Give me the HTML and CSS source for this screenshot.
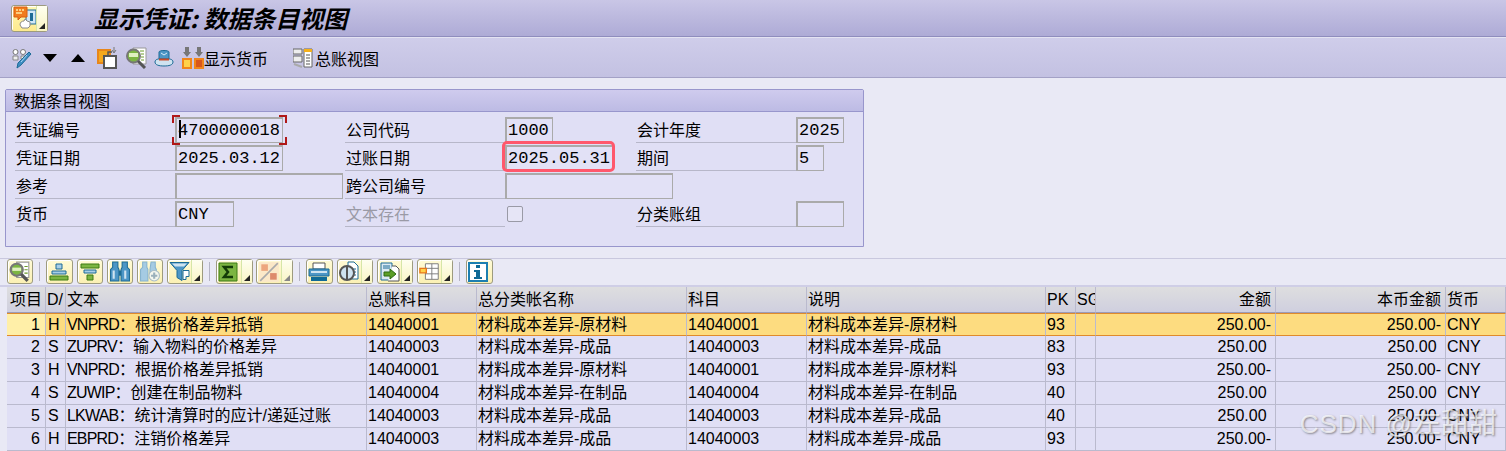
FILE: index.html
```html
<!DOCTYPE html>
<html lang="zh">
<head>
<meta charset="utf-8">
<title>显示凭证: 数据条目视图</title>
<link rel="stylesheet" href="styles.css">
</head>
<body>
<header class="titlebar">
  <button class="btn tcode"><svg width="24" height="24" viewBox="0 0 24 24"><path d="M13 4h10v14H13z" fill="#cfe7f6" stroke="#1c6b96"/><path d="M17 7h3v8h-3z" fill="#1c6b96"/><path d="M1 1h13v10H8l-3 3v-3H1z" fill="#f07c1e" stroke="#d85f10"/><path d="M3 4h2M6 4h2M9 4h2M3 7h6" stroke="#ffe9a0" stroke-width="1.500"/><path d="M7 19c0-3 2-4 4-4l1-2 2 2 3 1v4l-2 2H9z" fill="#fff" stroke="#8a8a8a"/></svg><span class="menu-corner"></span></button>
  <h1>显示凭证: 数据条目视图</h1>
</header>
<nav class="appbar">
  <svg class="i1" width="22" height="22" viewBox="0 0 22 22"><circle cx="3.500" cy="5" r="2.500" fill="#fff" stroke="#777"/><circle cx="11" cy="5" r="2.500" fill="#fff" stroke="#777"/><path d="M1 9h5v4H1zM9 9h4v3H9z" fill="#eee" stroke="#888"/><path d="M19 7L9 18l-4 3 1-5L17 5z" fill="#3f8fc4" stroke="#1c6b96"/><path d="M15 8l-6 7" stroke="#a8d4f0"/></svg>
  <svg class="i2" width="14" height="8" viewBox="0 0 14 8"><path d="M0 0h14L7 8z" fill="#000"/></svg>
  <svg class="i3" width="14" height="8" viewBox="0 0 14 8"><path d="M0 8h14L7 0z" fill="#000"/></svg>
  <svg class="i4" width="21" height="22" viewBox="0 0 21 22"><path d="M1 3h12v13H1z" fill="#f5a81c" stroke="#e8861a" stroke-width="2"/><path d="M7 9h12v12H7z" fill="#fff" stroke="#555" stroke-width="2"/><path d="M11 9V5h4" stroke="#555" stroke-width="1.500" fill="none"/><path d="M17 0v5M15 3l2 3 2-3" stroke="#777" fill="none"/></svg>
  <svg class="i5" width="21" height="22" viewBox="0 0 21 22"><path d="M7 1h13v16H7z" fill="#fff" stroke="#999"/><path d="M14 4h4M15 7h3M15 10h3M15 13h3" stroke="#6a9a2a"/><circle cx="7.500" cy="9" r="6.500" fill="#7cb542" stroke="#777" stroke-width="2"/><path d="M3 6h9v4H3z" fill="#dff0c0"/><path d="M12 14l7 7" stroke="#555" stroke-width="3"/></svg>
  <svg class="i6" width="20" height="18" viewBox="0 0 20 18"><path d="M5 10V3c0-2 10-2 10 0v7z" fill="#4d96c6" stroke="#1c6b96"/><path d="M7 4l3 2 3-2" stroke="#d8ecf8" fill="none"/><path d="M1 13c0-3 4-3 4-3h10s4 0 4 3-4 4-9 4-9-1-9-4z" fill="#cfe3f0" stroke="#1c6b96"/><path d="M5 10.500h10" stroke="#c94a2a" stroke-width="2"/></svg>
  <span class="tool-text t1"><svg width="22" height="22" viewBox="0 0 22 22"><path d="M3 0h4v5h2l-4 5-4-5h2zM15 0h4v5h2l-4 5-4-5h2z" fill="#777"/><path d="M1 12h8v9H1z" fill="#ffd24a" stroke="#f0861c" stroke-width="2"/><path d="M13 12h8v9h-8z" fill="#d8561c" stroke="#f0861c" stroke-width="2"/></svg>显示货币</span>
  <span class="tool-text t2"><svg width="20" height="20" viewBox="0 0 20 20"><path d="M0 1h9v5H0zM0 8h9v6H0z" fill="#eee" stroke="#666"/><path d="M1 16l8 3" stroke="#aaa" stroke-width="2"/><path d="M11 1h8v18h-8z" fill="#fff" stroke="#666"/><path d="M11 1h8v3h-8z" fill="#f5b01c"/><path d="M13 7h4M13 10h4M13 13h4M13 16h4" stroke="#555"/></svg>总账视图</span>
</nav>
<main class="content">
  <section class="group">
    <h2>数据条目视图</h2>
    <div class="form">
      <label>凭证编号</label>
      <div class="cell"><span class="field w108 focus"><i class="caret"></i>4700000018<b class="corner"></b></span></div>
      <label>公司代码</label>
      <div class="cell"><span class="field w48">1000</span></div>
      <label>会计年度</label>
      <div class="cell"><span class="field w48">2025</span></div>

      <label>凭证日期</label>
      <div class="cell"><span class="field w108">2025.03.12</span></div>
      <label>过账日期</label>
      <div class="cell"><span class="field w108 mark">2025.05.31</span></div>
      <label>期间</label>
      <div class="cell"><span class="field w28">5</span></div>

      <label>参考</label>
      <div class="cell"><span class="field w168"></span></div>
      <label>跨公司编号</label>
      <div class="cell"><span class="field w168"></span></div>
      <span class="blank"></span>
      <div class="cell"></div>

      <label>货币</label>
      <div class="cell"><span class="field w58">CNY</span></div>
      <label class="muted">文本存在</label>
      <div class="cell"><span class="check"></span></div>
      <label>分类账组</label>
      <div class="cell"><span class="field w48"></span></div>
    </div>
  </section>

  <div class="alvbar">
    <button class="btn s26"><svg width="22" height="22" viewBox="0 0 20 20"><path d="M7 1h11v14H7z" fill="#fff" stroke="#999"/><path d="M14 5h3M14 8h3M14 11h3" stroke="#6a9a2a"/><circle cx="7" cy="8" r="5.500" fill="#7cb542" stroke="#777" stroke-width="2"/><path d="M3 6h8v3H3z" fill="#dff0c0"/><path d="M11 12l6 6" stroke="#555" stroke-width="3"/></svg></button>
    <span class="sep"></span>
    <button class="btn s27"><svg width="22" height="20" viewBox="0 0 20 20"><path d="M7 2h6v5H7z" fill="#a8cfe8" stroke="#1c6b96"/><path d="M3 9h14v3H3z" fill="#a8cfe8" stroke="#1c6b96"/><path d="M1 14h18v4H1z" fill="#7cb542" stroke="#3d7a14"/></svg></button>
    <button class="btn s26"><svg width="22" height="20" viewBox="0 0 20 20"><path d="M1 2h18v4H1z" fill="#7cb542" stroke="#3d7a14"/><path d="M4 8h12v3H4z" fill="#a8cfe8" stroke="#1c6b96"/><path d="M7 13h6v5H7z" fill="#7cb542" stroke="#3d7a14"/></svg></button>
    <button class="btn s26"><svg width="22" height="21" viewBox="0 0 20 20"><path d="M3 1h5v5l1 2v11H1V8l2-2zM12 1h5v5l2 2v11h-8V8l1-2z" fill="#4d96c6" stroke="#1c6b96"/><path d="M9 9h2v5H9z" fill="#1c6b96"/><path d="M4 9v8M15 9v8" stroke="#cfe3f0" stroke-width="2"/></svg></button>
    <button class="btn s26"><svg width="22" height="21" viewBox="0 0 20 20"><path d="M3 1h4v5l1 2v11H1V8l2-2zM11 1h4v5l1 2v3h-6V8z" fill="#a5cbe3" stroke="#86b3cf"/><circle cx="14" cy="14" r="5" fill="#f4f6ee" stroke="#a9bcc6"/><path d="M14 11v6M11 14h6" stroke="#9ab0bc" stroke-width="2"/></svg></button>
    <button class="btn s36"><svg width="22" height="21" viewBox="0 0 22 20"><path d="M1 1h19l-7 8v10l-5-3V9z" fill="#4d96c6" stroke="#1c6b96"/><path d="M3 2h15l-3 3H6z" fill="#cfe3f0"/><path d="M14 9h6v6h-3v3h-3z" fill="#fff" stroke="#1c6b96"/></svg><span class="menu-corner"></span></button>
    <span class="sep"></span>
    <button class="btn s37"><svg width="20" height="20" viewBox="0 0 20 20"><path d="M1 1h18v18H1z" fill="#7cb542" stroke="#3d7a14"/><path d="M15 5H6l4 5-4 5h9" fill="none" stroke="#143c08" stroke-width="2.500"/></svg><span class="menu-corner"></span></button>
    <button class="btn s37 off"><svg width="22" height="22" viewBox="0 0 20 20"><path d="M1 1h18v18H1z" fill="#fbe8c8"/><path d="M2 18L18 2" stroke="#aaa" stroke-width="1.500"/><path d="M3 3h6v6H3z" fill="#eda67e"/><path d="M11 11h6v6h-6z" fill="#dd8a6c"/></svg><span class="menu-corner"></span></button>
    <span class="sep"></span>
    <button class="btn s27"><svg width="22" height="20" viewBox="0 0 22 20"><path d="M5 1h12v6H5z" fill="#fff" stroke="#555"/><path d="M1 7h20v7H1z" fill="#4d96c6" stroke="#1c6b96"/><path d="M3 9h16v2H3z" fill="#cfe3f0"/><path d="M3 15h16v4H3z" fill="#0f6a96"/></svg></button>
    <button class="btn s36"><svg width="22" height="22" viewBox="0 0 22 22"><path d="M9 1h6l4 4v13H9z" fill="#fff" stroke="#1c6b96"/><path d="M11 8h6M11 11h6M11 14h6" stroke="#1c6b96"/><circle cx="8" cy="12" r="7" fill="#cfe3f0" stroke="#555" stroke-width="2"/><path d="M8 6v12" stroke="#555" stroke-width="2"/></svg><span class="menu-corner"></span></button>
    <button class="btn s36"><svg width="22" height="20" viewBox="0 0 22 20"><path d="M2 1h11v17H2z" fill="#dbe9f3" stroke="#1c6b96"/><path d="M13 4h4l3 3v12H9" fill="#fff" stroke="#555"/><path d="M4 4h7M4 6h7" stroke="#1c6b96"/><path d="M5 10h6V7l6 5-6 5v-3H5z" fill="#5c9e28" stroke="#2c6a10"/></svg><span class="menu-corner"></span></button>
    <button class="btn s36"><svg width="22" height="20" viewBox="0 0 24 20"><path d="M7 1h14v17H7z" fill="#fff" stroke="#777"/><path d="M14 1v17M7 6h14M7 12h14" stroke="#777"/><path d="M1 6h7v5H1z" fill="#ffd24a" stroke="#e8761c" stroke-width="1.500"/></svg><span class="menu-corner"></span></button>
    <span class="sep"></span>
    <button class="btn s27"><svg width="20" height="20" viewBox="0 0 20 20"><path d="M1 1h18v18H1z" fill="#fff" stroke="#1c7fb0" stroke-width="2"/><path d="M8 3h4v3H8zM6 8h6v7h2v2H6v-2h2v-5H6z" fill="#0f6a96"/></svg></button>
  </div>

  <table class="grid">
    <colgroup>
      <col class="c1"><col class="c2"><col class="c3"><col class="c4"><col class="c5"><col class="c6"><col class="c7"><col class="c8"><col class="c9"><col class="c10"><col class="c11"><col class="c12">
    </colgroup>
    <thead>
      <tr><th>项目</th><th>D/</th><th>文本</th><th>总账科目</th><th>总分类帐名称</th><th>科目</th><th>说明</th><th>PK</th><th>SG</th><th class="num">金额</th><th class="num">本币金额</th><th>货币</th></tr>
    </thead>
    <tbody>
      <tr class="sel"><td class="pos">1</td><td>H</td><td><span class="code">VNPRD</span>：根据价格差异抵销</td><td>14040001</td><td>材料成本差异-原材料</td><td>14040001</td><td>材料成本差异-原材料</td><td>93</td><td></td><td class="num">250.00-</td><td class="num">250.00-</td><td>CNY</td></tr>
      <tr><td class="pos">2</td><td>S</td><td><span class="code">ZUPRV</span>：输入物料的价格差异</td><td>14040003</td><td>材料成本差异-成品</td><td>14040003</td><td>材料成本差异-成品</td><td>83</td><td></td><td class="num">250.00&nbsp;</td><td class="num">250.00&nbsp;</td><td>CNY</td></tr>
      <tr><td class="pos">3</td><td>H</td><td><span class="code">VNPRD</span>：根据价格差异抵销</td><td>14040001</td><td>材料成本差异-原材料</td><td>14040001</td><td>材料成本差异-原材料</td><td>93</td><td></td><td class="num">250.00-</td><td class="num">250.00-</td><td>CNY</td></tr>
      <tr><td class="pos">4</td><td>S</td><td><span class="code">ZUWIP</span>：创建在制品物料</td><td>14040004</td><td>材料成本差异-在制品</td><td>14040004</td><td>材料成本差异-在制品</td><td>40</td><td></td><td class="num">250.00&nbsp;</td><td class="num">250.00&nbsp;</td><td>CNY</td></tr>
      <tr><td class="pos">5</td><td>S</td><td><span class="code">LKWAB</span>：统计清算时的应计/递延过账</td><td>14040003</td><td>材料成本差异-成品</td><td>14040003</td><td>材料成本差异-成品</td><td>40</td><td></td><td class="num">250.00&nbsp;</td><td class="num">250.00&nbsp;</td><td>CNY</td></tr>
      <tr><td class="pos">6</td><td>H</td><td><span class="code">EBPRD</span>：注销价格差异</td><td>14040003</td><td>材料成本差异-成品</td><td>14040003</td><td>材料成本差异-成品</td><td>93</td><td></td><td class="num">250.00-</td><td class="num">250.00-</td><td>CNY</td></tr>
    </tbody>
  </table>
</main>
<div class="watermark">CSDN @<span class="wm-name">左甜甜</span></div>
</body>
</html>
```
FILE: styles.css
```css
* { box-sizing: border-box; }
html, body { margin: 0; height: 451px; overflow: hidden; }
body {
  background: #e9e9f5;
  color: #000;
  font: 16px "Liberation Sans", "Noto Sans CJK SC", sans-serif;
  position: relative;
}
svg { display: block; flex: none; }

.titlebar {
  height: 37px;
  display: flex;
  align-items: center;
  padding-left: 11px;
  background: linear-gradient(#c9c6e6, #aeabd6);
  border-bottom: 1px solid #8f8dbd;
}
.titlebar h1 {
  margin: 0 0 1px 46px;
  font: italic bold 24px "Noto Sans CJK SC", sans-serif;
  line-height: 30px;
}
.btn {
  position: relative;
  height: 25px;
  padding: 0 0 0 1px;
  display: flex;
  align-items: center;
  border: 1px solid #9d9b7e;
  border-radius: 3px;
  background: linear-gradient(#fffbd6, #fbf0b4);
  box-shadow: inset 1px 1px 0 #fff;
  flex: none;
}
.tcode {
  width: 37px;
  height: 27px;
  background: linear-gradient(#fff8b4, #fdea8e);
}
.menu-corner {
  position: absolute;
  right: 0; top: 0; bottom: 0;
  width: 11px;
  background: linear-gradient(#fffff0, #f8f4c4);
  border-left: 1px solid #d6e6a8;
}
.menu-corner::after {
  content: "";
  position: absolute;
  right: 2px; bottom: 2px;
  border-style: solid;
  border-width: 0 0 6px 6px;
  border-color: transparent transparent #222 transparent;
}
.off .menu-corner::after { border-bottom-color: #888; }
.off { margin-left: -1px; }

.appbar {
  height: 41px;
  display: flex;
  align-items: center;
  padding: 0 0 0 12px;
  background: linear-gradient(#cfcdea, #c3c1e2);
  border-top: 1px solid #e4e3f2;
  border-bottom: 1px solid #a3a1c6;
}
.i2 { margin-left: 9px; }
.i3 { margin-left: 14px; }
.i4 { margin-left: 12px; }
.i5 { margin-left: 8px; }
.i6 { margin-left: 7px; }
.tool-text { display: flex; align-items: center; }
.t1 { margin-left: 8px; }
.t2 { margin-left: 25px; gap: 2px; }

.content { padding: 11px 0 0; }

.group {
  width: 859px;
  height: 158px;
  margin-left: 5px;
  background: #e0dff5;
  border: 1px solid #9896cc;
  border-radius: 2px 2px 0 0;
}
.group h2 {
  margin: 0;
  height: 22px;
  padding-left: 8px;
  font: 400 16px/20px "Noto Sans CJK SC", sans-serif;
  background: linear-gradient(#cfcbee, #bdbbe4);
  border-bottom: 1px solid #9896cc;
}
.form {
  display: grid;
  grid-template-columns: 160px 170px 160px 131px 160px 1fr;
  grid-auto-rows: 28px;
  padding: 3px 0 0 9px;
}
.form label, .blank {
  border-bottom: 1px solid #b7b7c9;
  padding-left: 1px;
  line-height: 28px;
  font-family: "Noto Sans CJK SC", sans-serif;
}
.blank { border: 0; }
.muted { color: #9a9aa6; }
.cell { display: flex; align-items: flex-end; }
.field {
  position: relative;
  display: block;
  flex: none;
  height: 26px;
  padding-left: 1px;
  border: 1px solid #aaaaaa;
  border-top-width: 2px;
  border-left-width: 2px;
  background: #e2e1f6;
  font: 17px/24px "Liberation Mono", monospace;
  white-space: nowrap;
}
.w108 { width: 108px; }
.w48 { width: 48px; }
.w28 { width: 28px; }
.w168 { width: 168px; }
.w58 { width: 59px; }
.focus::before, .focus::after, .corner::before, .corner::after {
  content: "";
  position: absolute;
  width: 6px;
  height: 6px;
  border: solid #b01818;
  border-width: 0;
}
.focus::before { left: -5px; top: -4px; border-width: 2px 0 0 2px; }
.focus::after { right: -5px; top: -4px; border-width: 2px 2px 0 0; }
.corner::before { left: -5px; bottom: -3px; border-width: 0 0 2px 2px; }
.corner::after { right: -5px; bottom: -3px; border-width: 0 2px 2px 0; }
.caret {
  position: absolute;
  left: 2px; top: 1px;
  width: 2px; height: 18px;
  background: #000;
}
.mark::after {
  content: "";
  position: absolute;
  left: -5px; top: -6px; right: -3px; bottom: -2px;
  border: 3px solid #ff586c;
  border-radius: 5px;
}
.check {
  width: 16px;
  height: 16px;
  margin: 0 0 5px 2px;
  border: 1px solid #9a9aa6;
  border-radius: 2px;
  background: #e6e5f6;
}

.alvbar {
  height: 29px;
  margin-top: 11px;
  padding: 0 0 0 7px;
  display: flex;
  align-items: flex-start;
  gap: 4px;
  border-top: 1px solid #c9c8de;
  border-bottom: 2px solid #cfcee6;
  background: #e9e9f5;
}
.s26 { width: 26px; }
.s27 { width: 27px; }
.s36 { width: 36px; }
.s37 { width: 37px; }
.sep {
  width: 1px;
  height: 19px;
  margin: 3px 2px 0;
  background: #b4b4c4;
}

.grid {
  width: 1499px;
  margin-left: 7px;
  table-layout: fixed;
  border-collapse: separate;
  border-spacing: 0;
}
.c1 { width: 39px; } .c2 { width: 20px; } .c3 { width: 301px; } .c4 { width: 110px; }
.c5 { width: 210px; } .c6 { width: 120px; } .c7 { width: 239px; } .c8 { width: 30px; }
.c9 { width: 20px; } .c10 { width: 180px; } .c11 { width: 170px; } .c12 { width: 60px; }
.grid th, .grid td {
  padding: 0 1px 0 1px;
  font-weight: 400;
  text-align: left;
  white-space: nowrap;
  overflow: hidden;
  border-right: 1px solid #babace;
}
.grid th:first-child { padding-left: 3px; }
.grid td:nth-child(2) { padding-left: 2px; }
.grid th {
  height: 26px;
  line-height: 24px;
  background: linear-gradient(#dededf, #cfcfdf);
  border-bottom: 1px solid #9c9cb6;
}
.grid td {
  height: 23px;
  padding-bottom: 1px;
  line-height: 21px;
  background: #e0dff5;
  border-bottom: 1px solid #babace;
}
.grid .num { text-align: right; padding-right: 4px; }
.grid .pos { text-align: right; padding-right: 5px; background: #e0dff5; }
.code { letter-spacing: -.8px; }
.grid .sel td {
  padding-bottom: 0;
  line-height: 21px;
  background: #fddc80;
  border-top: 1px solid #df8a2c;
  border-bottom-color: #df8a2c;
}
.grid .sel .pos { background: #ffefa8; }

.watermark {
  position: absolute;
  right: 9px;
  bottom: 12px;
  font: 26px/30px "Liberation Sans", "Noto Sans CJK SC", sans-serif;
  letter-spacing: 1px;
  color: rgba(255, 255, 255, .7);
  text-shadow: 1px 1px 2px rgba(80, 80, 80, .6);
  pointer-events: none;
}
.wm-name { font-size: 28px; letter-spacing: 0; }
```
